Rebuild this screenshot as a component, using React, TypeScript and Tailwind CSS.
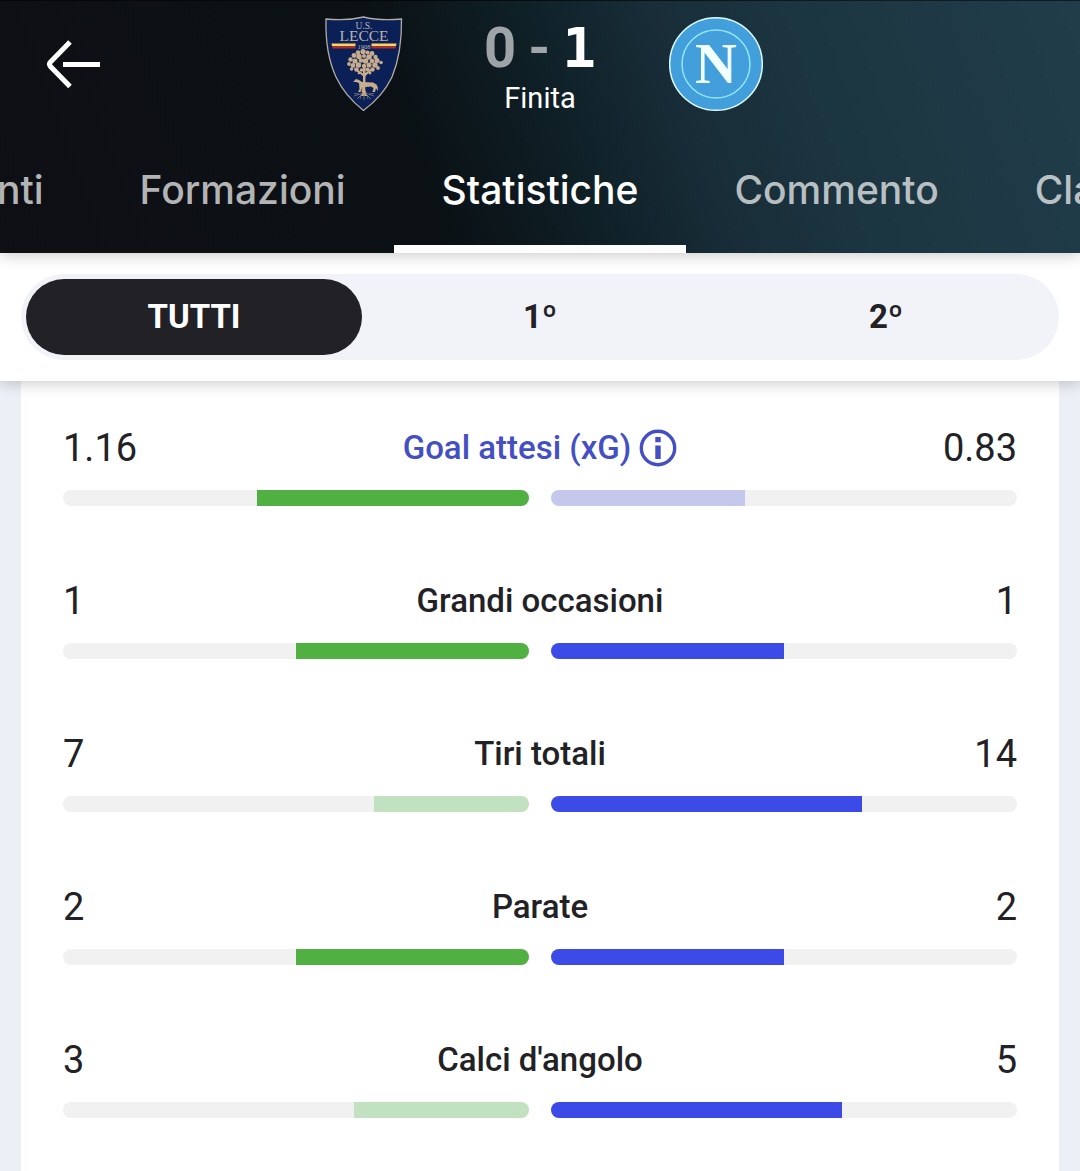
import { useState } from 'react'
import { clsx } from 'clsx'

type Stat = {
  label: string
  home: string
  away: string
  info?: boolean
}

const STATS: Stat[] = [
  { label: 'Goal attesi (xG)', home: '1.16', away: '0.83', info: true },
  { label: 'Grandi occasioni', home: '1', away: '1' },
  { label: 'Tiri totali', home: '7', away: '14' },
  { label: 'Parate', home: '2', away: '2' },
  { label: "Calci d'angolo", home: '3', away: '5' },
]

const PERIODS = ['TUTTI', '1º', '2º']

// x, y, radius of each leaf cluster in the oak
const LEAVES = [
  [42, 36.5, 2.2], [47, 35.5, 2.6], [51.5, 36.5, 2.1], [56, 37.5, 2.4],
  [38, 39.5, 2.4], [43, 40.5, 2.7], [48, 40, 2], [53, 41, 2.8], [59.5, 41, 2.2],
  [34.5, 43.5, 2.2], [39, 45, 2.6], [45, 44.5, 2.2], [49.5, 45, 2.8], [56, 45, 2.3], [61, 44.5, 2.5], [65, 46.5, 1.8],
  [33, 48, 1.9], [37, 49.5, 2.4], [42.5, 49, 2.7], [48, 50, 2.2], [53, 49, 2.6], [59, 49, 2.7],
  [35.5, 53, 1.7], [40.5, 53.5, 2.3], [45.5, 54, 1.8], [51.5, 53.5, 2.1], [56.5, 53.5, 2.2], [62, 52, 1.9],
  [43, 57, 1.3], [54, 57, 1.4],
]

function BackArrow() {
  return (
    <svg viewBox="0 0 56 52" className="h-[52px] w-14" fill="none" stroke="currentColor" strokeWidth="5">
      <path d="M26 4 L6.500 24 Q4.500 26 6.500 28.500 L26 48.500" />
      <path d="M19 26.500 H56" />
    </svg>
  )
}

function LecceCrest() {
  return (
    <svg viewBox="0 0 96 96" className="size-24 shrink-0" role="img" aria-label="Lecce">
      <path
        d="M10 3 Q31 5 47.500 1 Q64 5 85.500 3 Q86 37 76 61 Q67 80 47.500 94.500 Q29 80 20 61 Q9 37 10 3Z"
        fill="#0c2058"
        stroke="#b3aaa0"
        strokeWidth="1.3"
      />
      <g fill="#b9b4b5" textAnchor="middle" fontFamily="Liberation Serif, serif">
        <text x="48" y="12.500" fontSize="9.500">U.S.</text>
        <text x="48" y="25" fontSize="15.500">LECCE</text>
        <text x="48" y="32.500" fontSize="6.500">1908</text>
      </g>
      <path d="M15.500 27.500H39.500V30H16ZM55.500 27.500H80.500L80 30H55.500Z" fill="#f3d465" />
      <path d="M16 30H39.500V32.500H16.500ZM55.500 30H80L79.500 32.500H55.500Z" fill="#a62e2b" />
      <g fill="#c8ad8c">
        {LEAVES.map(([cx, cy, r]) => (
          <circle key={`${cx}-${cy}`} cx={cx} cy={cy} r={r} />
        ))}
        <path d="M47 50h2.600l-.3 24 2.200 6h-6.500l2-6z" />
        <path d="M47.500 60.500L38 53l1-1 9 6 8-6 1 1-8 7.500z" />
        <path d="M37 66l3-3 3 1 3 2 11 .5 3.500 2 1.500 3.500-.5 3-1.500-3-1 4h-2.500l1-4-2.500-1.500-6 .5-1 5h-2.500l1-5-2 5h-2.500l1.500-3-.5-6-3-1z" />
      </g>
      <path
        d="M38 80l9-3-6 6M58 80l-9-3 6 6M48 78v6M43 78l-5-.5M53 78l5-.5M45 79l-1 4M51 79l1 4"
        fill="none"
        stroke="#827b7b"
        strokeWidth="0.8"
      />
    </svg>
  )
}

function NapoliCrest() {
  return (
    <svg viewBox="0 0 96 96" className="size-24 shrink-0" role="img" aria-label="Napoli">
      <circle cx="48" cy="48" r="46.300" fill="#429fdb" stroke="#dcfcff" strokeWidth="1.500" />
      <circle cx="48" cy="48" r="34" fill="none" stroke="#92e6f4" strokeWidth="1.500" />
      <text x="48" y="67" fontSize="58" fontWeight="700" fill="#f1ffff" textAnchor="middle" fontFamily="Liberation Serif, serif">
        N
      </text>
    </svg>
  )
}

function InfoIcon() {
  return (
    <svg viewBox="0 0 38 38" className="size-[38px]" fill="none">
      <circle cx="19" cy="19" r="16.700" stroke="currentColor" strokeWidth="3.400" />
      <path d="M16.300 8h5.400v5.200h-5.400zM16.300 16.500h5.400V30h-5.400z" fill="currentColor" />
    </svg>
  )
}

function Tab({ label, active = false }: { label: string; active?: boolean }) {
  return (
    <button
      type="button"
      aria-current={active ? 'page' : undefined}
      className={clsx(
        'shrink-0 cursor-pointer border-b-8 px-12 pt-[30px] pb-[31px] font-[Inter,sans-serif] text-[39px] leading-[48px] font-medium',
        active ? 'border-white text-white' : 'border-transparent text-white/70',
      )}
    >
      {label}
    </button>
  )
}

function StatRow({ stat }: { stat: Stat }) {
  const home = Number(stat.home)
  const away = Number(stat.away)
  const total = home + away
  const label = 'flex items-center justify-center gap-2 text-[33px] font-medium'

  return (
    <li>
      <div className="grid grid-cols-[1fr_auto_1fr] items-center text-[38px] leading-[48px]">
        <span>{stat.home}</span>
        {stat.info ? (
          <button type="button" className={clsx(label, 'cursor-pointer text-[#444fc4]')}>
            {stat.label}
            <InfoIcon />
          </button>
        ) : (
          <span className={label}>{stat.label}</span>
        )}
        <span className="text-right">{stat.away}</span>
      </div>
      <div className="mt-[18px] grid grid-cols-2 gap-[22px]">
        <div className="flex h-4 justify-end overflow-hidden rounded-full bg-[#f1f1f1]">
          <div
            className={home >= away ? 'bg-[#50b042]' : 'bg-[#c1e1c1]'}
            style={{ width: `${(home / total) * 100}%` }}
          />
        </div>
        <div className="flex h-4 overflow-hidden rounded-full bg-[#f1f1f1]">
          <div
            className={away >= home ? 'bg-[#3c4be8]' : 'bg-[#c4c8ec]'}
            style={{ width: `${(away / total) * 100}%` }}
          />
        </div>
      </div>
    </li>
  )
}

export default function App() {
  const [period, setPeriod] = useState('TUTTI')

  return (
    <div className="flex min-h-screen flex-col bg-[#eceff5] font-[Roboto,sans-serif] text-[#222226]">
      <header className="relative z-20 border-t border-black/50 bg-[linear-gradient(70deg,#0e0f14_0%,#0d1015_22%,#0a1014_38%,#0f2027_52%,#182d38_63%,#1c3641_76%,#213d4a_100%)] pt-[15px] text-white shadow-[0_2px_14px_rgba(0,0,0,0.22)]">
        <div className="flex items-start">
          <div className="flex-1">
            <button type="button" aria-label="Indietro" className="mt-[22px] ml-11 block cursor-pointer">
              <BackArrow />
            </button>
          </div>
          <LecceCrest />
          <div className="flex w-64 flex-col items-center">
            <div className="flex items-center gap-3 text-[56px] leading-[64px] font-bold">
              <span className="text-white/60">0</span>
              <span className="text-white/60">-</span>
              <span className="font-['DejaVu_Sans_Mono',monospace]">1</span>
            </div>
            <div className="text-[29px] leading-9">Finita</div>
          </div>
          <NapoliCrest />
          <div className="flex-1" />
        </div>
        <nav className="mt-5 flex">
          <div className="flex flex-1 basis-0 justify-end overflow-hidden">
            <Tab label="Eventi" />
            <Tab label="Formazioni" />
          </div>
          <Tab label="Statistiche" active />
          <div className="flex flex-1 basis-0 overflow-hidden">
            <Tab label="Commento" />
            <Tab label="Classifica" />
          </div>
        </nav>
      </header>

      <div className="relative z-10 bg-white p-[21px] shadow-[0_2px_14px_rgba(0,0,0,0.22)]">
        <div className="grid grid-cols-3 gap-2.5 rounded-full bg-[#f2f3f8] p-[5px]">
          {PERIODS.map((p) => (
            <button
              key={p}
              type="button"
              aria-pressed={p === period}
              onClick={() => setPeriod(p)}
              className={clsx(
                'cursor-pointer rounded-full py-3.5 text-[33px] leading-[48px] font-bold',
                p === period && 'bg-[#222226] text-white',
              )}
            >
              {p}
            </button>
          ))}
        </div>
      </div>

      <main className="mx-[21px] flex-1 bg-white px-[42px] pt-[43px] pb-[53px]">
        <ul className="flex flex-col gap-[71px]">
          {STATS.map((stat) => (
            <StatRow key={stat.label} stat={stat} />
          ))}
        </ul>
      </main>
    </div>
  )
}
